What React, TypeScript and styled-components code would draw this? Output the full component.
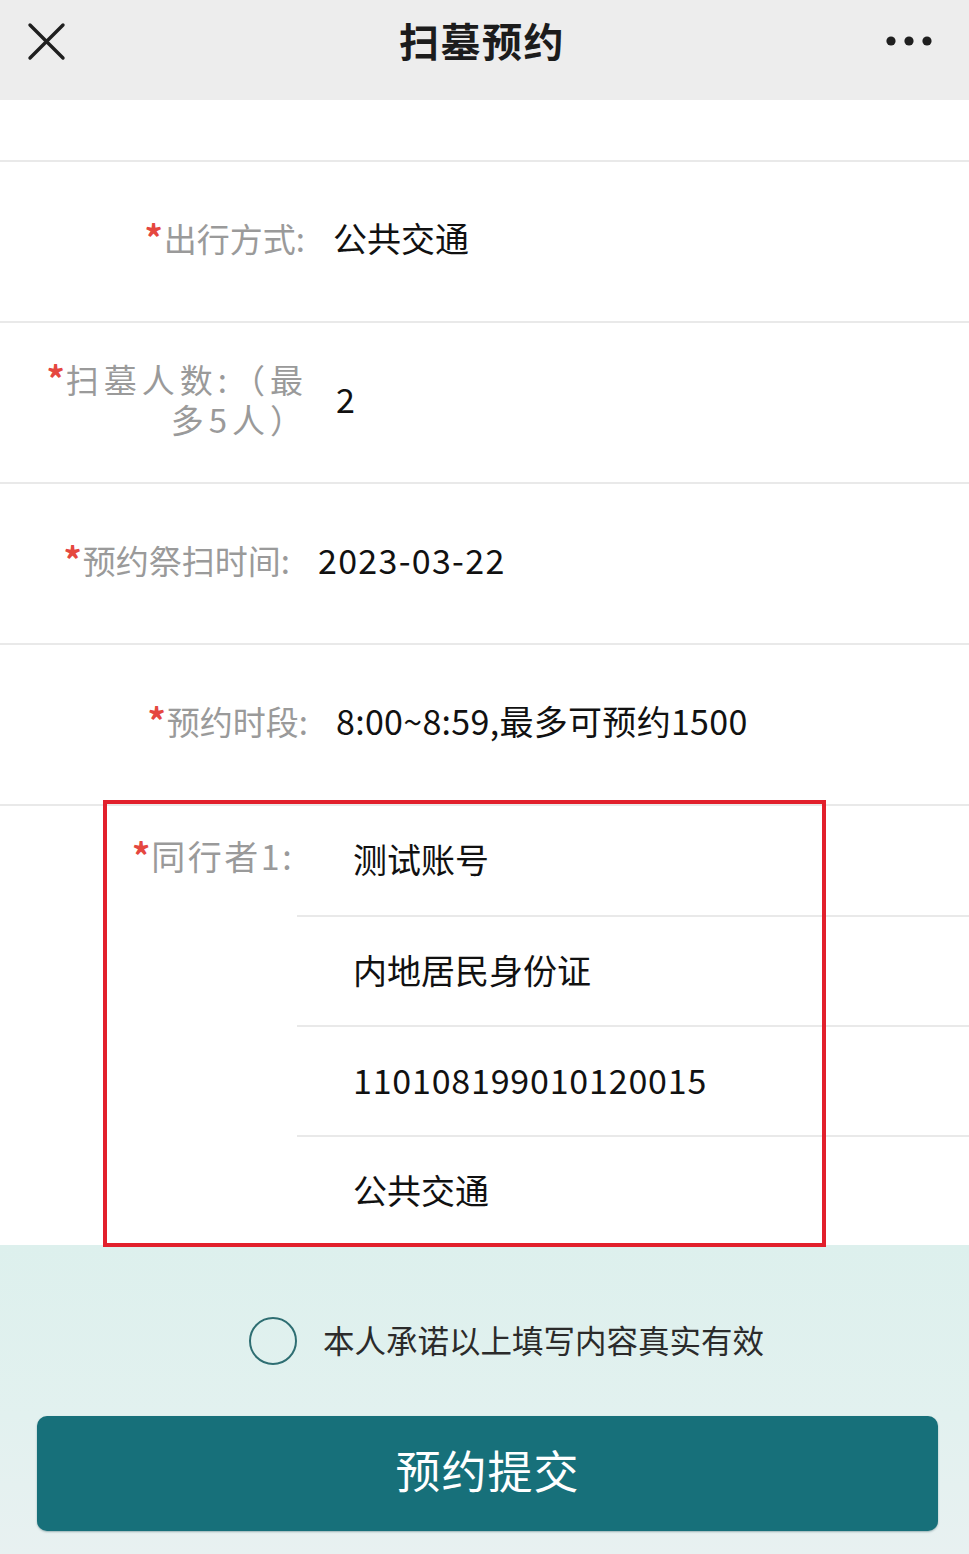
import styled, { createGlobalStyle } from 'styled-components';

const GlobalStyle = createGlobalStyle`
  html, body {
    margin: 0;
    padding: 0;
    background: #ffffff;
  }
  body {
    font-family: "Noto Sans CJK SC", "Noto Sans", sans-serif;
  }
`;

interface Field {
  label: string;
  value: string;
  labelEnd: number;
  labelSpacing?: number;
  valueSpacing?: number;
}

const fields: Field[] = [
  { label: '出行方式:', value: '公共交通', labelEnd: 305 },
  { label: '扫墓人数:（最\n多5人）', value: '2', labelEnd: 308, labelSpacing: 5 },
  { label: '预约祭扫时间:', value: '2023-03-22', labelEnd: 290, valueSpacing: 1.3 },
  { label: '预约时段:', value: '8:00~8:59,最多可预约1500', labelEnd: 308, valueSpacing: 0.3 },
];

const companion = [
  { value: '测试账号', spacing: 0 },
  { value: '内地居民身份证', spacing: 0 },
  { value: '110108199010120015', spacing: 0.8 },
  { value: '公共交通', spacing: 0 },
];

const CloseIcon = () => (
  <svg width="40" height="40" viewBox="0 0 40 40">
    <path d="M4 3 L37 36 M37 3 L4 36" stroke="#1f1f1f" strokeWidth="3.4" strokeLinecap="round" />
  </svg>
);

const MoreIcon = () => (
  <svg width="50" height="12" viewBox="0 0 50 12">
    <circle cx="7" cy="6" r="4.6" fill="#1f1f1f" />
    <circle cx="25" cy="6" r="4.6" fill="#1f1f1f" />
    <circle cx="43" cy="6" r="4.6" fill="#1f1f1f" />
  </svg>
);

const App = () => {
  return (
    <Page>
      <GlobalStyle />
      <NavBar>
        <NavLeft><CloseIcon /></NavLeft>
        <Title>扫墓预约</Title>
        <NavRight><MoreIcon /></NavRight>
      </NavBar>

      <Form>
        <Spacer />
        {fields.map((f) => (
          <FieldRow key={f.label}>
            <Label $end={f.labelEnd} $spacing={f.labelSpacing ?? 0}>
              <Star>*</Star>
              {f.label.split('\n').map((line, i) => (
                <span key={i}>{i > 0 && <br />}{line}</span>
              ))}
            </Label>
            <Value $spacing={f.valueSpacing ?? 0}>{f.value}</Value>
          </FieldRow>
        ))}

        <Companion>
          <CompanionLabel>
            <Star>*</Star>同行者1:
          </CompanionLabel>
          <SubList>
            {companion.map((c) => (
              <SubRow key={c.value} $spacing={c.spacing}>{c.value}</SubRow>
            ))}
          </SubList>
          <Highlight />
        </Companion>
      </Form>

      <Footer>
        <Agreement>
          <RadioCircle />
          <AgreeText>本人承诺以上填写内容真实有效</AgreeText>
        </Agreement>
        <SubmitButton>预约提交</SubmitButton>
      </Footer>
    </Page>
  );
};

const Page = styled.div`
  width: 969px;
  min-height: 1554px;
  display: flex;
  flex-direction: column;
  overflow: hidden;
`;

const NavBar = styled.div`
  height: 100px;
  background: #ededed;
  display: grid;
  grid-template-columns: 1fr auto 1fr;
  align-items: center;
  padding: 0 35px 0 26px;
  box-sizing: border-box;
`;

const NavLeft = styled.div`
  display: flex;
  align-items: center;
  margin-top: -17px;
`;

const NavRight = styled.div`
  display: flex;
  justify-content: flex-end;
  margin-top: -18px;
`;

const Title = styled.div`
  font-size: 40px;
  font-weight: 700;
  color: #1c1c1c;
  margin-top: -21px;
  margin-left: 4px;
  letter-spacing: 1.5px;
`;

const Form = styled.div`
  background: #ffffff;
  display: flex;
  flex-direction: column;
`;

const Spacer = styled.div`
  height: 60px;
  border-bottom: 2px solid #e9e9e9;
`;

const FieldRow = styled.div`
  height: 161px;
  box-sizing: border-box;
  border-bottom: 2px solid #e9e9e9;
  display: flex;
  align-items: center;
`;

const Label = styled.div<{ $end: number; $spacing: number }>`
  width: ${({ $end }) => $end}px;
  flex-shrink: 0;
  text-align: right;
  font-size: 33px;
  line-height: 40px;
  color: #9a9a9a;
  letter-spacing: ${({ $spacing }) => $spacing}px;
  margin-top: -9px;
`;

const Star = styled.span`
  color: #e5473f;
  font-size: 36px;
  font-weight: 700;
  letter-spacing: 0;
  margin-right: 1px;
`;

const Value = styled.div<{ $spacing: number }>`
  margin-left: 28px;
  margin-top: -8px;
  font-size: 34px;
  color: #111111;
  letter-spacing: ${({ $spacing }) => $spacing}px;
`;

const Companion = styled.div`
  position: relative;
  display: flex;
  height: 439px;
`;

const CompanionLabel = styled.div`
  width: 297px;
  flex-shrink: 0;
  box-sizing: border-box;
  padding: 28px 0 0 132px;
  font-size: 34px;
  line-height: 40px;
  color: #9a9a9a;
  letter-spacing: 2.5px;
`;

const SubList = styled.div`
  flex: 1;
  display: flex;
  flex-direction: column;
`;

const SubRow = styled.div<{ $spacing: number }>`
  height: 110px;
  box-sizing: border-box;
  border-bottom: 2px solid #e9e9e9;
  display: flex;
  align-items: center;
  padding: 0 0 4px 56px;
  font-size: 34px;
  color: #111111;
  letter-spacing: ${({ $spacing }) => $spacing}px;

  &:first-child {
    height: 111px;
  }

  &:last-child {
    border-bottom: none;
    height: 108px;
  }
`;

const Highlight = styled.div`
  position: absolute;
  left: 103px;
  top: -6px;
  width: 723px;
  height: 447px;
  box-sizing: border-box;
  border: 4px solid #e2202c;
  pointer-events: none;
`;

const Footer = styled.div`
  flex: 1;
  background: linear-gradient(180deg, #ddf0ed 0%, #e2f1ef 55%, #e8f1f1 100%);
  display: flex;
  flex-direction: column;
  padding: 72px 31px 23px 37px;
`;

const Agreement = styled.div`
  display: flex;
  align-items: center;
  gap: 26px;
  padding-left: 212px;
  height: 48px;
`;

const RadioCircle = styled.div`
  width: 48px;
  height: 48px;
  border-radius: 50%;
  border: 2px solid #2e6e72;
  box-sizing: border-box;
  flex-shrink: 0;
`;

const AgreeText = styled.div`
  font-size: 31.5px;
  color: #2b2b2b;
  margin-top: -4px;
`;

const SubmitButton = styled.button`
  margin-top: 51px;
  height: 115px;
  border: none;
  border-radius: 10px;
  background: #17707a;
  box-shadow: 0 1px 2px rgba(0, 60, 70, 0.35);
  color: #ffffff;
  font-family: "Noto Sans CJK SC", sans-serif;
  font-size: 45px;
  letter-spacing: 1px;
  padding: 0 0 8px;
  cursor: pointer;
`;

export default App;
